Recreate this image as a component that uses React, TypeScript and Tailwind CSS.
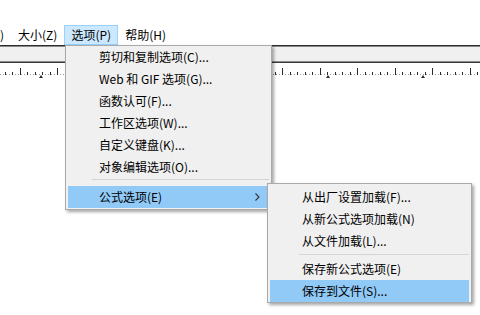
const font = { fontFamily: '"Noto Sans CJK SC", "Noto Sans", sans-serif' };

const mainItems = [
  "剪切和复制选项(C)...",
  "Web 和 GIF 选项(G)...",
  "函数认可(F)...",
  "工作区选项(W)...",
  "自定义键盘(K)...",
  "对象编辑选项(O)...",
];

function Ruler() {
  const ticks = [];
  for (let i = -2; i < 64; i++) {
    const x = 19.5 + i * 7.5;
    const long = i % 5 === 0;
    ticks.push(
      <line
        key={i}
        x1={Math.round(x) + 0.5}
        x2={Math.round(x) + 0.5}
        y1={long ? 5 : 9}
        y2={12}
        stroke="#2a2a2a"
        strokeWidth={1}
      />
    );
  }
  const marks = [];
  for (let k = 0; k < 5; k++) {
    const x = Math.round(41 + k * 95.5);
    marks.push(<path key={k} d={`M${x - 2} 15 L${x + 2} 15 L${x} 12 Z`} fill="#2a2a2a" />);
  }
  return (
    <svg width="480" height="16" className="block">
      <line x1="0" x2="480" y1="11.5" y2="11.5" stroke="#9a9a9a" strokeWidth="1" strokeDasharray="1 2" />
      {ticks}
      {marks}
    </svg>
  );
}

function Chevron() {
  return (
    <svg width="5" height="8" viewBox="0 0 5 8" className="block">
      <path d="M0.5 0.5 L4 4 L0.5 7.5" fill="none" stroke="#333" strokeWidth="1.1" />
    </svg>
  );
}

export default function App() {
  return (
    <div className="relative w-[480px] h-[315px] overflow-hidden bg-white text-[12px] text-black" style={font}>
      <div className="h-[25px]" />
      {/* menu bar */}
      <div className="flex h-[20px] items-center leading-none">
        <div className="flex h-full items-center pr-[7px]">)</div>
        <div className="flex h-full items-center px-[7px]">大小(Z)</div>
        <div className="flex h-full items-center px-[6px] bg-[#cce8ff] border border-[#99d1ff]">选项(P)</div>
        <div className="flex h-full items-center px-[7px]">帮助(H)</div>
      </div>
      <div className="h-[1px] bg-[#2e2e2e]" />
      <div className="h-[1px] bg-[#8a8a8a]" />
      <div className="h-[14px] bg-[#f0f0f0]" />
      <div className="h-[1px] bg-[#8a8a8a]" />
      <div className="h-[1px] bg-[#3a3a3a]" />
      <Ruler />

      {/* main dropdown */}
      <div className="absolute left-[65px] top-[45px] w-[207px] bg-[#f0f0f0] border border-[#a9a9a9] shadow-[2px_2px_3px_rgba(0,0,0,0.35)] pb-[1px]">
        {mainItems.map((t) => (
          <div key={t} className="flex h-[22px] items-center mx-[2px] pl-[31px]">
            {t}
          </div>
        ))}
        <div className="ml-[26px] mr-[2px] mt-[1px] mb-[6px] h-[1px] bg-[#d4d4d4]" />
        <div className="flex h-[22px] items-center justify-between mx-[2px] pl-[31px] pr-[9px] bg-[#91c9f7]">
          <span>公式选项(E)</span>
          <Chevron />
        </div>
      </div>

      {/* submenu */}
      <div className="absolute left-[267px] top-[183px] w-[205px] bg-[#f0f0f0] border border-[#a9a9a9] shadow-[2px_2px_3px_rgba(0,0,0,0.35)] pt-[2px]">
        <div className="flex h-[22px] items-center mx-[2px] pl-[32px]">从出厂设置加载(F)...</div>
        <div className="flex h-[22px] items-center mx-[2px] pl-[32px]">从新公式选项加载(N)</div>
        <div className="flex h-[22px] items-center mx-[2px] pl-[32px]">从文件加载(L)...</div>
        <div className="ml-[31px] mr-[2px] mt-[2px] mb-[3px] h-[1px] bg-[#d4d4d4]" />
        <div className="flex h-[22px] items-center mx-[2px] pl-[32px]">保存新公式选项(E)</div>
        <div className="flex h-[22px] items-center mx-[2px] pl-[32px] bg-[#91c9f7]">保存到文件(S)...</div>
      </div>
    </div>
  );
}
